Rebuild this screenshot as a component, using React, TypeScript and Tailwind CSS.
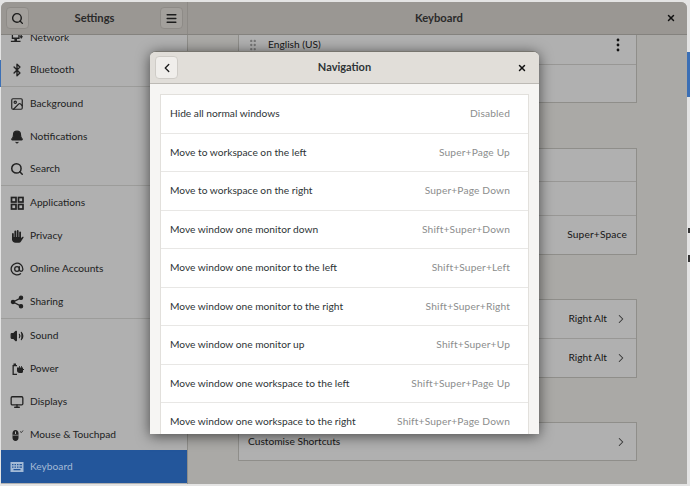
import { ReactNode } from 'react'
import { Search, Menu, ChevronLeft, ChevronRight, X, Bluetooth, Image, Bell, AtSign, Volume2, Monitor, GripVertical } from 'lucide-react'

function NetworkIcon() {
  return (
    <svg viewBox="0 0 16 16" className="h-[14px] w-[14px]" fill="currentColor">
      <path d="M2 1h9v8H2zm1.500 1.500v5h6v-5zM1 11h11v1.500H1zM5 9h3v2H5zM12 4h1.500v2h1.500L12.700 9 11 6h1z" fillRule="evenodd" />
    </svg>
  )
}

function AppsIcon() {
  return (
    <svg viewBox="0 0 14 14" className="h-[14px] w-[14px]" fill="none" stroke="currentColor" strokeWidth="1.700">
      <rect x="1.500" y="1.500" width="4.500" height="4.500" />
      <rect x="8.500" y="1.500" width="4.500" height="4.500" />
      <rect x="1.500" y="8.500" width="4.500" height="4.500" />
      <rect x="8.500" y="8.500" width="4.500" height="4.500" />
    </svg>
  )
}

function HandIcon() {
  return (
    <svg viewBox="0 0 14 14" className="h-[14px] w-[14px]" fill="currentColor">
      <rect x="2" y="4" width="1.800" height="6" rx="0.900" />
      <rect x="4.400" y="1.500" width="1.800" height="8" rx="0.900" />
      <rect x="6.800" y="1" width="1.800" height="8" rx="0.900" />
      <rect x="9.200" y="2.500" width="1.800" height="7" rx="0.900" />
      <path d="M2 8h9v1l2-1.500.700.700L11 12.500c-.500.800-1.200 1.200-2 1.200H5.500C3.500 13.700 2 12.500 2 10.500z" />
    </svg>
  )
}

function ShareIcon() {
  return (
    <svg viewBox="0 0 14 14" className="h-[14px] w-[14px]" fill="currentColor" stroke="currentColor" strokeWidth="1.300">
      <circle cx="3" cy="7" r="1.600" />
      <circle cx="11" cy="2.800" r="1.600" />
      <circle cx="11" cy="11.200" r="1.600" />
      <path d="M3 7l8-4.200M3 7l8 4.200" fill="none" />
    </svg>
  )
}

function PowerIcon() {
  return (
    <svg viewBox="0 0 14 14" className="h-[14px] w-[14px]" fill="currentColor">
      <path d="M2.500 3V13H7v-1.300H3.800V4.300H7V3H6V1.500H3.500V3z" />
      <path d="M7 5.500h2.200V4H10v1.500h1V4h.800v1.500H13V7h1v1h-1v1.500c0 1-.800 1.500-1.800 1.500H9.500C8 11 7 10 7 8.500z" />
    </svg>
  )
}

function MouseIcon() {
  return (
    <svg viewBox="0 0 14 14" className="h-[14px] w-[14px]" fill="currentColor">
      <path d="M5.500 2C3.600 2 2.500 3.400 2.500 5.200v4.600C2.500 11.600 3.600 13 5.500 13s3-1.400 3-3.200V5.200C8.500 3.400 7.400 2 5.500 2z" />
      <rect x="5" y="3.500" width="1" height="2.500" fill="#b0b0b0" />
      <rect x="2.500" y="6.800" width="6" height="0.700" fill="#b0b0b0" />
      <path d="M10 3.500l1.500 1 1.500-2" fill="none" stroke="currentColor" strokeWidth="0.800" />
    </svg>
  )
}

function KeyboardIcon() {
  return (
    <svg viewBox="0 0 14 14" className="h-[14px] w-[14px]" fill="currentColor">
      <path fillRule="evenodd" d="M0.500 2h13v10h-13zM2 4v1.200h1.500V4zm2.500 0v1.200H6V4zM7 4v1.200h1.500V4zm2.500 0v1.200H12V4zM2 6.500v1.200h1.500V6.500zm2.500 0v1.200H6V6.500zM7 6.500v1.200h1.500V6.500zm2.500 0v1.200H12V6.500zM3.500 9v1.200h7V9z" />
    </svg>
  )
}

const iconCls = 'h-[14px] w-[14px]'

const navItems: { label: string; icon: ReactNode; cls?: string }[] = [
  { label: 'Bluetooth', icon: <Bluetooth className={iconCls} strokeWidth={2.4} />, cls: 'h-[33px] border-b border-[#9c9c9a]' },
  { label: 'Background', icon: <Image className={iconCls} strokeWidth={2} />, cls: 'h-[33px]' },
  { label: 'Notifications', icon: <Bell className={iconCls} fill="currentColor" />, cls: 'h-[33px]' },
  { label: 'Search', icon: <Search className={iconCls} strokeWidth={2.6} />, cls: 'h-[33px] border-b border-[#9c9c9a]' },
  { label: 'Applications', icon: <AppsIcon />, cls: 'h-[33px]' },
  { label: 'Privacy', icon: <HandIcon />, cls: 'h-[33px]' },
  { label: 'Online Accounts', icon: <AtSign className={iconCls} strokeWidth={2.2} />, cls: 'h-[33px]' },
  { label: 'Sharing', icon: <ShareIcon />, cls: 'h-[34px] border-b border-[#9c9c9a]' },
  { label: 'Sound', icon: <Volume2 className={iconCls} fill="currentColor" />, cls: 'h-[33px]' },
  { label: 'Power', icon: <PowerIcon />, cls: 'h-[33px]' },
  { label: 'Displays', icon: <Monitor className={iconCls} strokeWidth={2.2} />, cls: 'h-[33px]' },
  { label: 'Mouse & Touchpad', icon: <MouseIcon />, cls: 'h-[32px] pt-[1px]' },
]

const shortcuts = [
  ['Hide all normal windows', 'Disabled'],
  ['Move to workspace on the left', 'Super+Page Up'],
  ['Move to workspace on the right', 'Super+Page Down'],
  ['Move window one monitor down', 'Shift+Super+Down'],
  ['Move window one monitor to the left', 'Shift+Super+Left'],
  ['Move window one monitor to the right', 'Shift+Super+Right'],
  ['Move window one monitor up', 'Shift+Super+Up'],
  ['Move window one workspace to the left', 'Shift+Super+Page Up'],
  ['Move window one workspace to the right', 'Shift+Super+Page Down'],
]

function HeaderButton({ children }: { children: ReactNode }) {
  return (
    <div className="flex h-[22px] w-[23px] items-center justify-center rounded-[4px] border border-[#8e8b87] bg-[#a3a09c] text-[#1c1c1c]">
      {children}
    </div>
  )
}

function Card({ children, className }: { children: ReactNode; className: string }) {
  return <div className={`flex w-[399px] shrink-0 flex-col border border-[#8f8e8a] bg-[#b0b0b0] text-[#161616] ${className}`}>{children}</div>
}

export default function App() {
  return (
    <div className="relative h-[486px] w-[690px] overflow-hidden bg-[#e4e4e4] pb-[2px] pl-[1px] pr-[3px] pt-[2px] font-['Lato',sans-serif] text-[10.2px]">
      {/* bits of the window behind */}
      <div className="absolute left-0 top-[60px] h-[27px] w-[1px] bg-[#3b6fb5]" />
      <div className="absolute right-0 top-[52px] h-[45px] w-[3px] bg-[#3b6fb5]" />
      <div className="absolute right-0 top-[228px] h-[5px] w-[2px] bg-[#333]" />
      <div className="absolute right-0 top-[255px] h-[7px] w-[2px] bg-[#333]" />

      <div className="relative flex h-full flex-col overflow-hidden rounded-t-[6px] bg-[#aaa9a6]">
        {/* Header */}
        <div className="relative z-10 flex h-[33px] shrink-0 items-center border-b border-[#84827e] bg-[#9a9793]">
          <div className="flex h-full w-[187px] items-center justify-between border-r border-[#8d8a86] pl-[5px] pr-[4px]">
            <HeaderButton><Search size={13} strokeWidth={2.6} /></HeaderButton>
            <span className="text-[11.2px] font-bold text-[#2a2a2a]">Settings</span>
            <HeaderButton><Menu size={13} strokeWidth={2.6} /></HeaderButton>
          </div>
          <div className="flex flex-1 items-center justify-between pl-[227px] pr-[11px]">
            <span className="text-[11.2px] font-bold text-[#2a2a2a]">Keyboard</span>
            <X size={10} strokeWidth={3.5} className="text-[#111]" />
          </div>
        </div>

        <div className="flex min-h-0 flex-1">
          {/* Sidebar */}
          <div className="flex w-[187px] shrink-0 flex-col overflow-hidden border-r border-[#8f8e8a] bg-[#b0b0b0] text-[#222]">
            <div className="-mt-[14px] flex h-[33px] shrink-0 items-center gap-[6px] pl-[9px]">
              <NetworkIcon />
              <span>Network</span>
            </div>
            {navItems.map(({ label, icon, cls }) => (
              <div key={label} className={`flex shrink-0 items-center gap-[6px] pl-[9px] ${cls}`}>
                {icon}
                <span>{label}</span>
              </div>
            ))}
            <div className="flex h-[33px] shrink-0 items-center gap-[6px] bg-[#23569b] pl-[9px] pt-[1px] text-[#a3bad6]">
              <KeyboardIcon />
              <span>Keyboard</span>
            </div>
          </div>

          {/* Keyboard panel, dimmed behind the dialog */}
          <div className="flex min-w-0 flex-1 flex-col overflow-hidden pl-[50px]">
            <Card className="-mt-[10px] h-[78px]">
              <div className="flex h-[39px] shrink-0 items-center border-b border-[#989795] pl-[7px] pr-[16px]">
                <GripVertical size={14} className="text-[#777]" />
                <span className="ml-[8px]">English (US)</span>
                <svg viewBox="0 0 4 14" className="ml-auto h-[14px] w-[4px]" fill="#111">
                  <circle cx="2" cy="2" r="1.400" />
                  <circle cx="2" cy="7" r="1.400" />
                  <circle cx="2" cy="12" r="1.400" />
                </svg>
              </div>
            </Card>
            <Card className="mt-[45px] h-[107px]">
              <div className="h-[33px] border-b border-[#989795]" />
              <div className="h-[34px] border-b border-[#989795]" />
              <div className="flex flex-1 items-center justify-end pr-[9px] tracking-[0.15px]">Super+Space</div>
            </Card>
            <Card className="mt-[44px] h-[79px]">
              <div className="flex h-[39px] items-center justify-end gap-[7px] border-b border-[#989795] pr-[8px]">
                Right Alt<ChevronRight size={14} strokeWidth={1.8} className="text-[#333]" />
              </div>
              <div className="flex flex-1 items-center justify-end gap-[7px] pr-[8px]">
                Right Alt<ChevronRight size={14} strokeWidth={1.8} className="text-[#333]" />
              </div>
            </Card>
            <Card className="mt-[44px] h-[39px]">
              <div className="flex flex-1 items-center justify-between pl-[9px] pr-[8px]">
                Customise Shortcuts<ChevronRight size={14} strokeWidth={1.8} className="text-[#333]" />
              </div>
            </Card>
          </div>
        </div>
      </div>

      {/* Dialog */}
      <div className="absolute left-[150px] top-[51px] flex h-[383px] w-[389px] flex-col overflow-hidden rounded-t-[6px] border-t border-[#77756f] bg-[#f6f5f3] shadow-[0_2px_14px_rgba(0,0,0,0.6)]">
        <div className="flex h-[32px] shrink-0 items-center justify-between border-b border-[#bdbab5] bg-[#e1ded9] pl-[5px] pr-[12px]">
          <div className="flex h-[23px] w-[23px] items-center justify-center rounded-[4px] border border-[#cfccc7] bg-[#f0eeeb] text-[#222]">
            <ChevronLeft size={14} strokeWidth={2.4} />
          </div>
          <span className="mr-[6px] pb-[1px] text-[11px] font-bold text-[#2e3436]">Navigation</span>
          <X size={10} strokeWidth={3.5} className="text-[#111]" />
        </div>
        <div className="mx-[10px] mt-[10px] flex flex-col border-x border-t border-[#e2e0dc] bg-white text-[#2e3436]">
          {shortcuts.map(([name, keys]) => (
            <div key={name} className="flex h-[38.5px] shrink-0 items-center justify-between border-b border-[#e8e7e5] pl-[9px] pr-[18px]">
              <span>{name}</span>
              <span className="tracking-[0.15px] text-[#8b8d8d]">{keys}</span>
            </div>
          ))}
        </div>
      </div>
    </div>
  )
}
